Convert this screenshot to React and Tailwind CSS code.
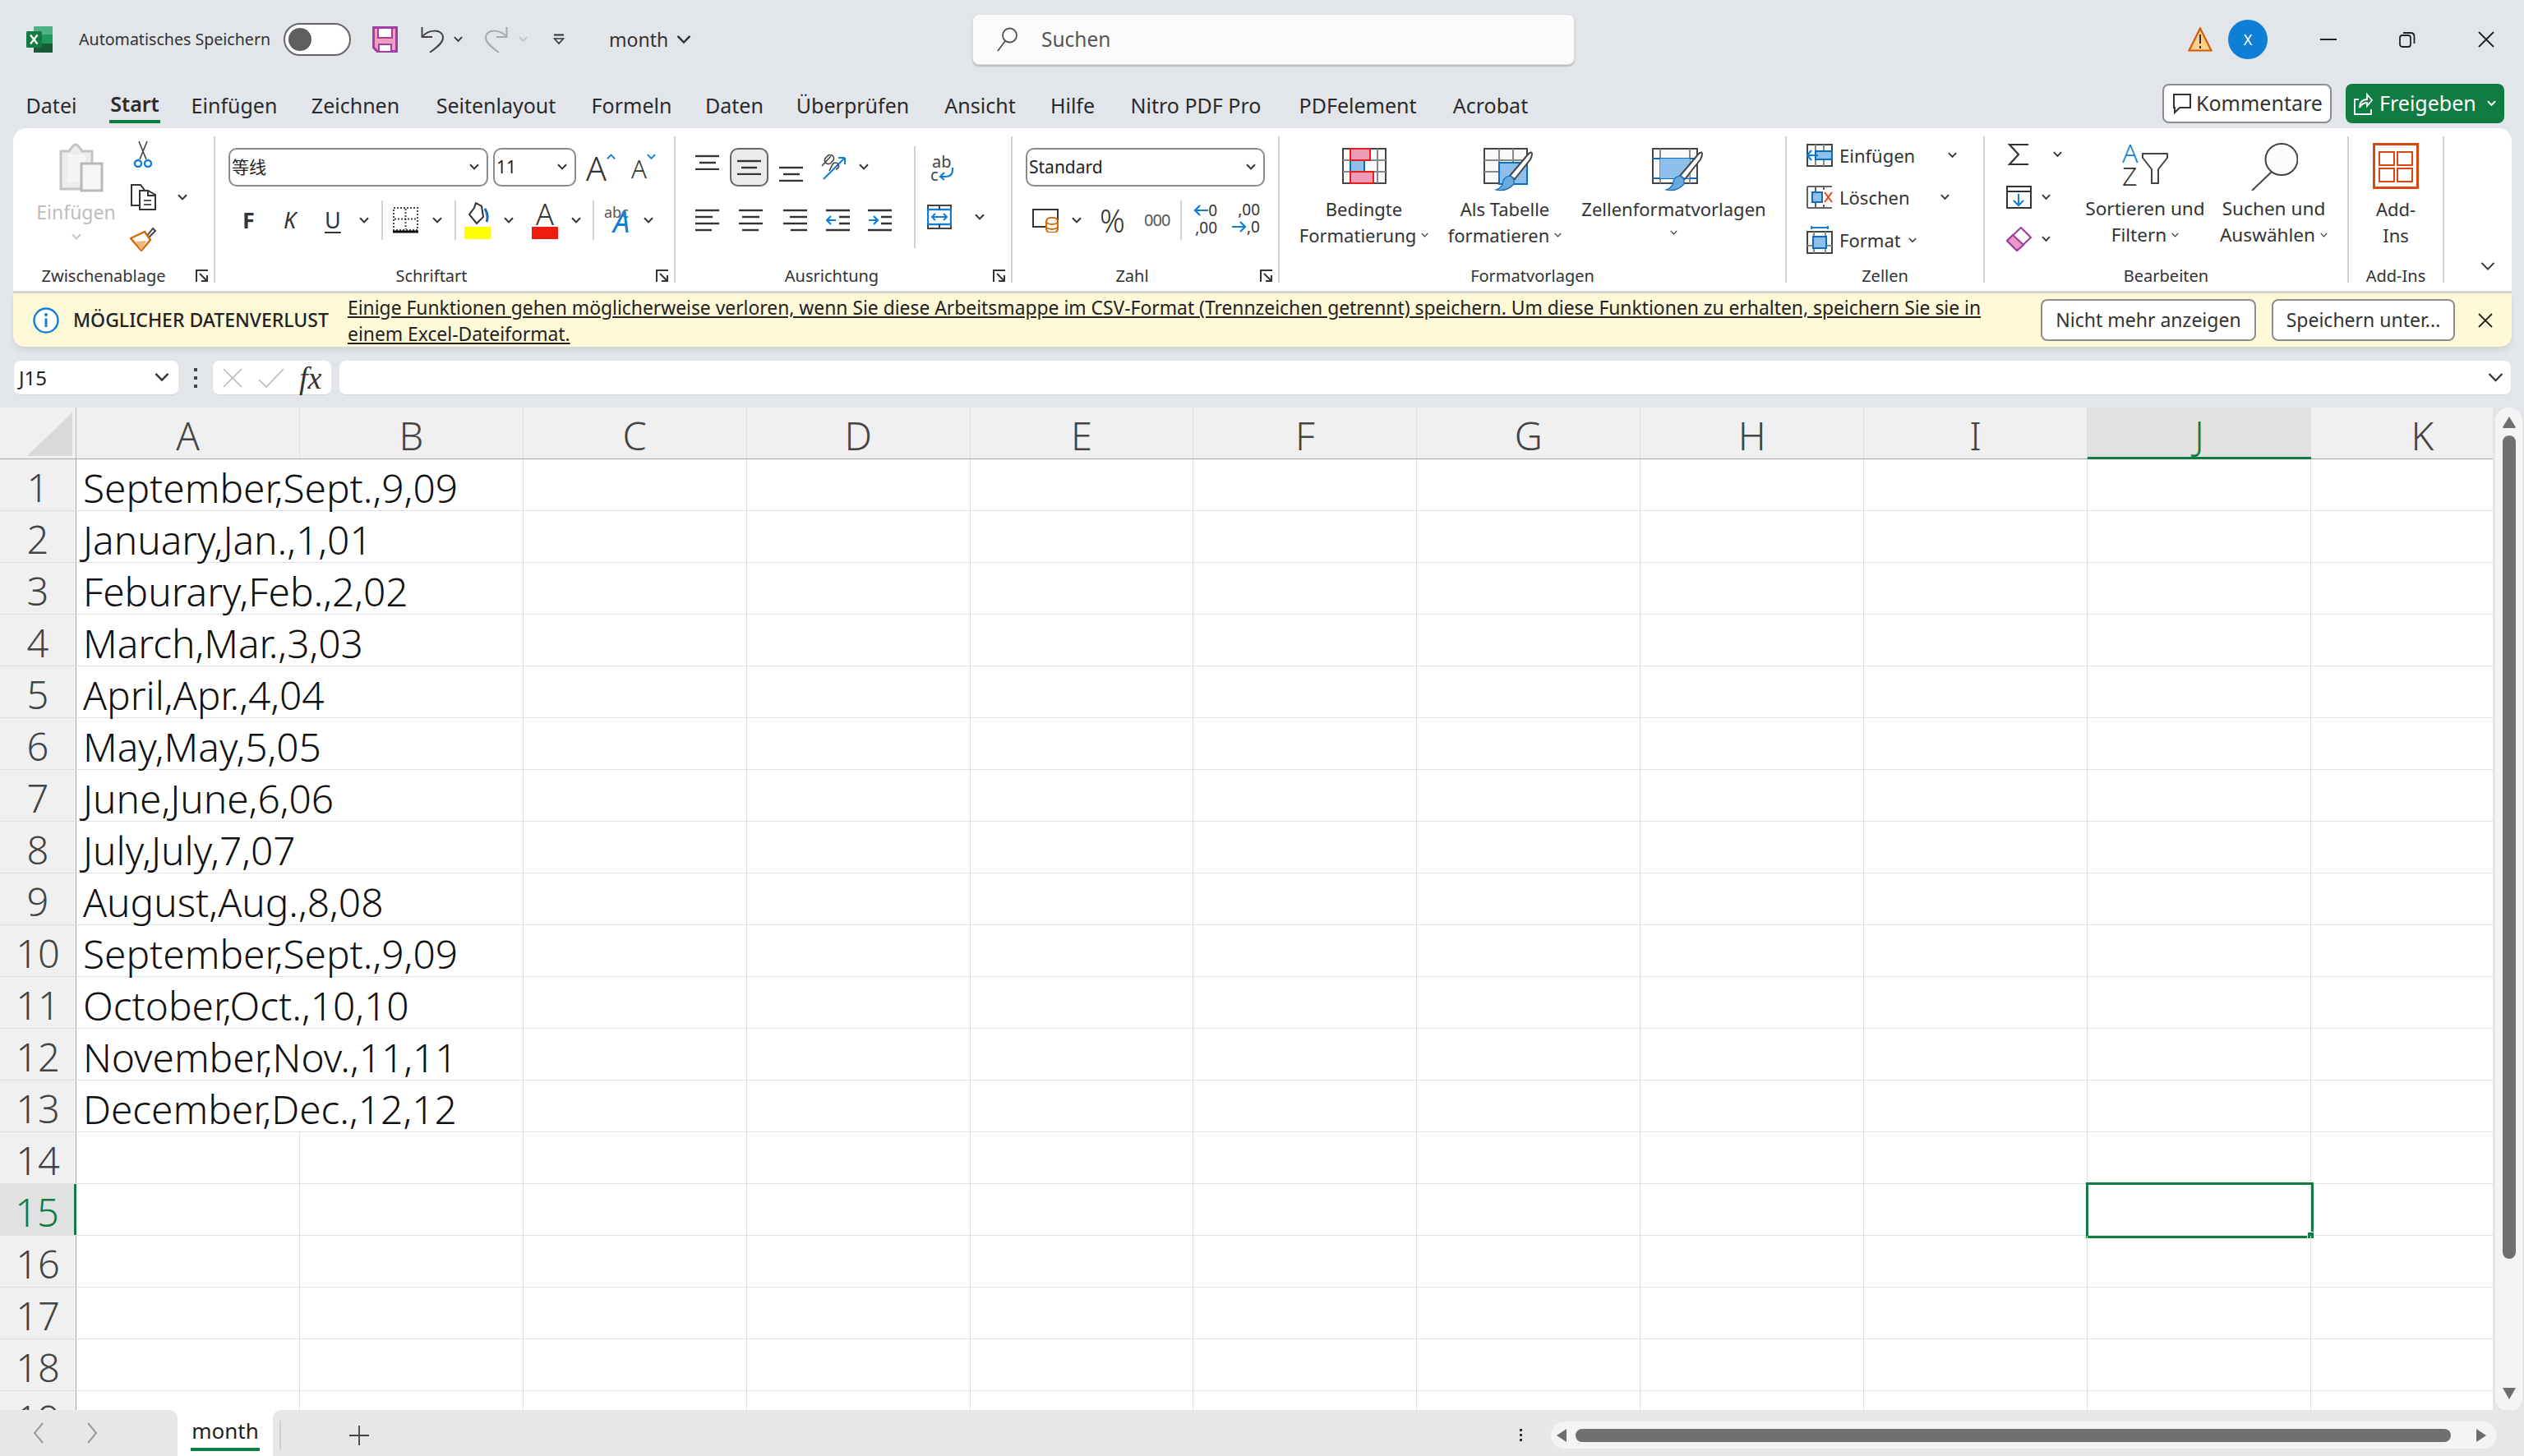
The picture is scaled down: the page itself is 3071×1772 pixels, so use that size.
import React from 'react';

const Svg = ({ w, h, className = '', children }) => (
  <svg width={w} height={h} viewBox={`0 0 ${w} ${h}`} fill="none" className={`shrink-0 block ${className}`}>{children}</svg>
);
const Chev = ({ className = '', s = 12, color = '#333', sw = 2 }) => (
  <svg width={s} height={s * 0.67} viewBox="0 0 12 8" fill="none" className={`shrink-0 block ${className}`}>
    <path d="M1 1.2 L6 6.4 L11 1.2" stroke={color} strokeWidth={sw} />
  </svg>
);
const Launcher = () => (
  <Svg w={16} h={16} className="absolute right-[6px] top-[6px]">
    <path d="M1 15 V1 H15" stroke="#333" strokeWidth="2" />
    <path d="M5 5 L14 14 M14 7 V14 H7" stroke="#333" strokeWidth="2" />
  </Svg>
);
const Group = ({ className, label, launcher, children, labelClass = '' }) => (
  <div className={`relative flex flex-col h-[178px] shrink-0 border-r-2 border-[#d2d2d2] ${className}`}>
    <div className="h-[156px] shrink-0">{children}</div>
    <div className={`relative h-[28px] flex items-center justify-center text-[20px] leading-[28px] text-[#333] ${labelClass}`}>
      <span>{label}</span>
      {launcher ? <Launcher /> : null}
    </div>
  </div>
);
const Lines = ({ w = 30, h, lines, color = '#333', className = '' }) => (
  <Svg w={w} h={h} className={className}>
    {lines.map(([a, b, y], i) => (
      <path key={i} d={`M${a} ${y} H${b}`} stroke={color} strokeWidth="2.4" />
    ))}
  </Svg>
);
const Vsep = ({ className = '' }) => <div className={`w-[2px] bg-[#d2d2d2] shrink-0 ${className}`} />;
const Combo = ({ className, children, chevClass = '' }) => (
  <div className={`h-[47px] border-2 border-[#8a8a8a] rounded-[10px] bg-white flex items-center justify-between pl-[2px] pr-[9px] text-[21px] text-[#222] shrink-0 ${className}`}>
    <span>{children}</span>
    <Chev className={chevClass} />
  </div>
);

const ExcelLogo = () => (
  <Svg w={32} h={32}>
    <rect x="9" y="0" width="23" height="10" fill="#4fb286" />
    <rect x="9" y="10" width="23" height="11" fill="#1f9a5c" />
    <rect x="9" y="21" width="23" height="11" fill="#185c37" />
    <rect x="0" y="6" width="19" height="20" rx="1.5" fill="#107c41" />
    <path d="M5 10.5 L13.5 21.5 M13.5 10.5 L5 21.5" stroke="#fff" strokeWidth="2.4" />
  </Svg>
);
const SaveIcon = () => (
  <Svg w={31} h={32}>
    <path d="M1.5 1.5 H29.5 V30.5 H6 L1.5 26 Z" fill="#ee9fc0" stroke="#a23da6" strokeWidth="3" />
    <rect x="7" y="2" width="17" height="12" fill="#fff" stroke="#a23da6" strokeWidth="2" />
    <rect x="8" y="22" width="15" height="9" fill="#fff" stroke="#a23da6" strokeWidth="2" />
  </Svg>
);
const Undo = ({ color, flip }) => (
  <Svg w={28} h={32} className={flip ? '-scale-x-100' : ''}>
    <path d="M1.5 1 V13 H14 M2 13 C7 4 27 2 27 14 C27 21 17 27 11 32" stroke={color} strokeWidth="2" />
  </Svg>
);
const Qat = () => (
  <Svg w={14} h={14}>
    <path d="M1 1.5 H13" stroke="#333" strokeWidth="2" />
    <path d="M1.5 6 L7 12 L12.5 6 Z" stroke="#333" strokeWidth="1.6" />
  </Svg>
);

export default function App() {
  const rows = [
    'September,Sept.,9,09', 'January,Jan.,1,01', 'Feburary,Feb.,2,02', 'March,Mar.,3,03', 'April,Apr.,4,04',
    'May,May,5,05', 'June,June,6,06', 'July,July,7,07', 'August,Aug.,8,08', 'September,Sept.,9,09',
    'October,Oct.,10,10', 'November,Nov.,11,11', 'December,Dec.,12,12',
  ];
  const cols = ['A', 'B', 'C', 'D', 'E', 'F', 'G', 'H', 'I', 'J', 'K'];
  const all = Array.from({ length: 19 }, (_, i) => i + 1);
  const restCols = [2, 3, 4, 5, 6, 7, 8, 9, 10];
  return (
    <div className="w-[3071px] h-[1772px] overflow-hidden flex flex-col bg-[#e2e5ea] font-['Noto_Sans','Noto_Sans_CJK_SC',sans-serif] text-[#222]">
      {/* title bar */}
      <div className="h-[98px] shrink-0 flex items-center pb-[2px] pl-[32px]">
        <ExcelLogo />
        <span className="ml-[32px] w-[234px] text-[19.6px] whitespace-nowrap text-[#333]">Automatisches Speichern</span>
        <div className="ml-[15px] w-[82px] h-[40px] rounded-full border-2 border-[#666] bg-white flex items-center pl-[4px]">
          <div className="w-[28px] h-[28px] rounded-full bg-[#5e5e5e]" />
        </div>
        <div className="ml-[26px]"><SaveIcon /></div>
        <div className="ml-[28px]"><Undo color="#444" /></div>
        <Chev className="ml-[12px]" s={11} />
        <div className="ml-[27px]"><Undo color="#a8a8a8" flip /></div>
        <Chev className="ml-[13px]" s={11} color="#c4c4c4" />
        <div className="ml-[31px]"><Qat /></div>
        <span className="ml-[54px] w-[70px] text-[23px] text-[#333]">month</span>
        <Chev className="ml-[12px]" s={18} sw={1.6} />
        <div className="ml-[342px] w-[733px] h-[62px] rounded-[8px] bg-[#fbfbfb] border border-[#dcdcdc] shadow-[0_2px_2px_rgba(0,0,0,0.18)] flex items-center pl-[28px]">
          <Svg w={26} h={30}>
            <circle cx="16.5" cy="10" r="8.5" stroke="#555" strokeWidth="1.8" />
            <path d="M11 17 L2 29" stroke="#555" strokeWidth="1.8" />
          </Svg>
          <span className="ml-[29px] text-[24.5px] text-[#555]">Suchen</span>
        </div>
        <Svg w={30} h={30} className="ml-[746px]">
          <path d="M15 1.5 L28.5 28.5 H1.5 Z" fill="#fdd08b" stroke="#d9590b" strokeWidth="2.2" />
          <path d="M15 9 V20 M15 23 V26" stroke="#333" strokeWidth="2" />
        </Svg>
        <div className="ml-[19px] w-[48px] h-[48px] rounded-full bg-[#0f7fd6] text-white flex items-center justify-center text-[18px]">X</div>
        <div className="ml-[64px] w-[20px] h-[2px] bg-[#222]" />
        <Svg w={20} h={20} className="ml-[76px]">
          <rect x="1" y="5" width="13" height="14" rx="3" stroke="#222" strokeWidth="1.8" />
          <path d="M5 2 H14 Q18.5 2 18.5 6.5 V15" stroke="#222" strokeWidth="1.8" />
        </Svg>
        <Svg w={20} h={20} className="ml-[76px]">
          <path d="M1 1 L19 19 M19 1 L1 19" stroke="#222" strokeWidth="1.8" />
        </Svg>
      </div>
      {/* menu */}
      <div className="h-[58px] shrink-0 flex items-start pl-[32px] text-[25px] text-[#2b2b2b] whitespace-nowrap">
        <div className="w-[61px] h-[52px] pt-[9px] flex items-center justify-center">Datei</div>
        <div className="ml-[40px] w-[62px] h-[52px] pt-[9px] flex items-center justify-center border-b-4 border-[#107c41] font-semibold">Start</div>
        <div className="ml-[38px] w-[104px] h-[52px] pt-[9px] flex items-center justify-center">Einfügen</div>
        <div className="ml-[42px] w-[107px] h-[52px] pt-[9px] flex items-center justify-center">Zeichnen</div>
        <div className="ml-[44px] w-[147px] h-[52px] pt-[9px] flex items-center justify-center">Seitenlayout</div>
        <div className="ml-[43px] w-[97px] h-[52px] pt-[9px] flex items-center justify-center">Formeln</div>
        <div className="ml-[41px] w-[71px] h-[52px] pt-[9px] flex items-center justify-center">Daten</div>
        <div className="ml-[41px] w-[135px] h-[52px] pt-[9px] flex items-center justify-center">Überprüfen</div>
        <div className="ml-[45px] w-[85px] h-[52px] pt-[9px] flex items-center justify-center">Ansicht</div>
        <div className="ml-[43px] w-[54px] h-[52px] pt-[9px] flex items-center justify-center">Hilfe</div>
        <div className="ml-[42px] w-[162px] h-[52px] pt-[9px] flex items-center justify-center">Nitro PDF Pro</div>
        <div className="ml-[45px] w-[142px] h-[52px] pt-[9px] flex items-center justify-center">PDFelement</div>
        <div className="ml-[44px] w-[93px] h-[52px] pt-[9px] flex items-center justify-center">Acrobat</div>
        <div className="ml-[771px] mt-[4px] w-[206px] h-[48px] rounded-[8px] border-2 border-[#8d8d8d] bg-white flex items-center pl-[10px] text-[#333]">
          <Svg w={24} h={26}>
            <path d="M2 2 H22 V18 H9 L3 24 V18 H2 Z" stroke="#333" strokeWidth="2" />
          </Svg>
          <span className="ml-[5px] text-[25px]">Kommentare</span>
        </div>
        <div className="ml-[17px] mt-[4px] w-[193px] h-[48px] rounded-[8px] bg-[#107c41] text-white flex items-center pl-[9px]">
          <Svg w={24} h={30}>
            <path d="M7 10 H2 V28 H22 V22" stroke="#fff" strokeWidth="1.8" />
            <path d="M8 20 C8 12 13 10 17 10 V4 L23 11 L17 18 V14 C13 14 10 16 8 20 Z" stroke="#fff" strokeWidth="1.8" />
          </Svg>
          <span className="ml-[8px] text-[25px]">Freigeben</span>
          <Chev className="ml-[13px]" s={11} color="#fff" />
        </div>
      </div>
      {/* ribbon */}
      <div className="ml-[16px] w-[3040px] h-[201px] shrink-0 bg-white rounded-t-[16px] border-b-[3px] border-[#d4d4d4] pt-[10px] flex">
        <Group className="w-[246px]" label="Zwischenablage" launcher labelClass="pr-[24px]">
          <div className="flex">
            <div className="ml-[30px] w-[93px] flex flex-col items-center">
              <Svg w={54} h={60} className="mt-[8px] ml-[12px]">
                <path d="M2 10 H12 L15 6 Q20 -2 25 6 L28 10 H40 V56 H2 Z" fill="#ececec" stroke="#c4c4c4" strokeWidth="3" />
                <rect x="10" y="14" width="22" height="34" fill="#f5f5f5" />
                <rect x="27" y="25" width="25" height="33" fill="#f6f6f6" stroke="#b8b8b8" strokeWidth="3" />
              </Svg>
              <span className="mt-[9px] text-[23px] leading-[30px] text-[#bdbdbd] whitespace-nowrap">Einfügen</span>
              <Chev className="mt-[11px]" color="#c4c4c4" s={12} />
            </div>
            <div className="ml-[19px] flex flex-col">
              <Svg w={32} h={32} className="mt-[6px]">
                <path d="M11 0 L20 22 M21 0 L12 22" stroke="#444" strokeWidth="1.6" />
                <circle cx="10" cy="27" r="4" stroke="#0f7fd6" strokeWidth="2.4" />
                <circle cx="22" cy="27" r="4" stroke="#0f7fd6" strokeWidth="2.4" />
              </Svg>
              <div className="mt-[20px] flex items-center">
                <Svg w={32} h={32}>
                  <path d="M12 1 H2 V26 H11" stroke="#333" strokeWidth="2" />
                  <path d="M10 1 H13 L19 9 M12 8 V31 H31 V13 L22 8 Z M22 8 V14 H31" stroke="#333" strokeWidth="2" />
                  <path d="M17 20 H26 M17 25 H26" stroke="#555" strokeWidth="2" />
                </Svg>
                <Chev className="ml-[26px]" />
              </div>
              <Svg w={32} h={30} className="mt-[20px]">
                <path d="M22 11 L29 2 L32 5 L24 13 Z" fill="#fff" stroke="#444" strokeWidth="2" transform="translate(-1 0)" />
                <path d="M1 14 L18 6 L25 16 L14 29 Z" fill="#fff" stroke="#d16a00" strokeWidth="2.4" />
                <path d="M7 18 L20 17 L14 29 Z" fill="#f3b67a" />
              </Svg>
            </div>
          </div>
        </Group>
        <Group className="w-[560px]" label="Schriftart" launcher labelClass="pr-[32px]">
          <div className="flex items-center ml-[16px] mt-[14px]">
            <Combo className="w-[316px]"><span className="font-['Noto_Sans_CJK_SC',sans-serif]">等线</span></Combo>
            <Combo className="ml-[6px] w-[101px]">11</Combo>
            <div className="ml-[12px] w-[40px] flex items-start text-[41px] leading-[44px] font-light text-[#333]">
              <span>A</span>
              <Chev className="mt-[5px] rotate-180" s={11} color="#0f7fd6" />
            </div>
            <div className="ml-[15px] w-[40px] flex items-start text-[31px] leading-[44px] font-light text-[#333]">
              <span className="mt-[2px]">A</span>
              <Chev className="mt-[6px]" s={11} color="#0f7fd6" />
            </div>
          </div>
          <div className="flex items-center h-[48px] ml-[33px] mt-[17px]">
            <span className="w-[14px] text-[27px] font-bold text-[#333]">F</span>
            <span className="ml-[36px] w-[20px] text-[27px] italic text-[#333]">K</span>
            <span className="ml-[30px] w-[20px] text-[27px] text-[#333] underline decoration-2 underline-offset-4">U</span>
            <Chev className="ml-[22px]" />
            <Vsep className="ml-[15px] h-[48px]" />
            <Svg w={31} h={32} className="ml-[12px]">
              <rect x="1" y="1" width="29" height="27" stroke="#444" strokeWidth="2" strokeDasharray="2 2" />
              <path d="M15.5 2 V27 M2 14.5 H29" stroke="#444" strokeWidth="2" strokeDasharray="2 2" />
              <path d="M0 30 H31" stroke="#111" strokeWidth="3" />
            </Svg>
            <Chev className="ml-[17px]" />
            <Vsep className="ml-[15px] h-[48px]" />
            <div className="ml-[10px] w-[32px] flex flex-col items-center">
              <Svg w={32} h={30}>
                <path d="M14 1 L21 5 L23 18 L15 26 L6 15 L12 7 Z" fill="#fff" stroke="#333" strokeWidth="2" />
                <path d="M25 8 Q30 16 27 24" stroke="#0f6cbd" strokeWidth="3" />
              </Svg>
              <div className="w-[32px] h-[15px] bg-[#ffff00]" />
            </div>
            <Chev className="ml-[16px]" />
            <div className="ml-[22px] w-[32px] flex flex-col items-center">
              <span className="h-[30px] text-[36px] leading-[30px] font-light text-[#333]">A</span>
              <div className="w-[32px] h-[15px] bg-[#ee1c0e]" />
            </div>
            <Chev className="ml-[16px]" />
            <Vsep className="ml-[14px] h-[48px]" />
            <div className="ml-[12px] w-[36px] h-[48px] relative flex">
              <span className="text-[18px] leading-[24px] text-[#555] mt-[2px]">abc</span>
              <span className="absolute left-[11px] top-[4px] text-[36px] leading-[44px] italic text-[#0f7fd6]">A</span>
            </div>
            <Chev className="ml-[12px]" />
          </div>
        </Group>
        <Group className="w-[410px]" label="Ausrichtung" launcher labelClass="pr-[28px]">
          <div className="flex">
            <div className="flex flex-col">
              <div className="flex items-start h-[74px] pt-[14px] ml-[24px]">
                <Lines h={19} lines={[[0, 29, 2], [5, 25, 10], [0, 29, 18]]} className="mt-[8px]" />
                <div className="ml-[12px] w-[47px] h-[47px] bg-[#ebebeb] border-2 border-[#666] rounded-[10px] flex items-center justify-center">
                  <Lines h={19} w={29} lines={[[0, 29, 2], [5, 24, 10], [0, 29, 18]]} />
                </div>
                <Lines h={19} lines={[[0, 29, 2], [5, 25, 10], [0, 29, 18]]} className="ml-[13px] mt-[22px]" />
                <Svg w={32} h={31} className="ml-[21px] mt-[8px]">
                  <path d="M3 30 L29 4 M29 4 H21 M29 4 V12" stroke="#0f7fd6" strokeWidth="2" />
                  <path d="M1 14 L12 2 M7 3 A4.5 4.5 0 1 1 13 9 A4.5 4.5 0 1 1 7 3 M10 20 L14 12 A4 4 0 1 1 18 18" stroke="#444" strokeWidth="1.6" />
                </Svg>
                <Chev className="ml-[14px] mt-[19px]" />
              </div>
              <div className="flex items-center ml-[24px] mt-[14px]">
                <Lines h={28} lines={[[0, 29, 2], [0, 21, 10], [0, 29, 18], [0, 20, 26]]} />
                <Lines h={28} lines={[[0, 29, 2], [4, 25, 10], [0, 29, 18], [4, 24, 26]]} className="ml-[23px]" />
                <Lines h={28} lines={[[0, 29, 2], [8, 29, 10], [0, 29, 18], [9, 29, 26]]} className="ml-[24px]" />
                <Svg w={29} h={28} className="ml-[22px]">
                  <path d="M0 2 H29 M16 10 H29 M16 18 H29 M0 26 H29" stroke="#333" strokeWidth="2.4" />
                  <path d="M12 14 H1 M6 9 L1 14 L6 19" stroke="#0f7fd6" strokeWidth="2.2" />
                </Svg>
                <Svg w={29} h={28} className="ml-[22px]">
                  <path d="M0 2 H29 M16 10 H29 M16 18 H29 M0 26 H29" stroke="#333" strokeWidth="2.4" />
                  <path d="M1 14 H12 M7 9 L12 14 L7 19" stroke="#0f7fd6" strokeWidth="2.2" />
                </Svg>
              </div>
            </div>
            <Vsep className="ml-[27px] mt-[12px] h-[124px]" />
            <div className="flex flex-col ml-[20px]">
              <div className="mt-[23px] h-[30px] w-[32px] flex flex-col text-[20px] leading-[15px] text-[#444] -ml-[2px]">
                <span className="ml-[2px]">ab</span>
                <div className="flex items-center">
                  <span>c</span>
                  <Svg w={20} h={16}>
                    <path d="M17 0 V3 Q17 11 8 11 H2 M7 6 L2 11 L7 15" stroke="#0f7fd6" strokeWidth="2.2" />
                  </Svg>
                </div>
              </div>
              <div className="mt-[30px] flex items-center -ml-[6px]">
                <Svg w={30} h={30}>
                  <rect x="1" y="1" width="28" height="28" stroke="#444" strokeWidth="2" />
                  <rect x="1" y="6" width="28" height="18" fill="#fff" stroke="#0f7fd6" strokeWidth="2.4" />
                  <path d="M15 1 V6 M15 24 V29" stroke="#444" strokeWidth="2" />
                  <path d="M6 15 H24 M10 11 L6 15 L10 19 M20 11 L24 15 L20 19" stroke="#0f7fd6" strokeWidth="2" />
                </Svg>
                <Chev className="ml-[28px]" />
              </div>
            </div>
          </div>
        </Group>
        <Group className="w-[325px]" label="Zahl" launcher labelClass="pr-[32px]">
          <Combo className="ml-[16px] mt-[14px] w-[291px]">Standard</Combo>
          <div className="flex items-center h-[48px] ml-[24px] mt-[17px]">
            <Svg w={32} h={30}>
              <rect x="1" y="2" width="30" height="21" stroke="#333" strokeWidth="2" />
              <rect x="17" y="12" width="14" height="18" rx="5" fill="#fff" stroke="#d16a00" strokeWidth="2.2" />
              <path d="M17 18 Q24 22 31 18 M17 24 Q24 28 31 24" stroke="#d16a00" strokeWidth="2" />
            </Svg>
            <Chev className="ml-[16px]" />
            <span className="ml-[22px] w-[34px] text-[38px] font-light text-[#333] leading-[44px]">%</span>
            <span className="ml-[20px] w-[32px] text-[20px] text-[#555] tracking-[-1px]">000</span>
            <Vsep className="ml-[12px] h-[48px]" />
            <div className="ml-[12px] w-[31px] h-[46px] flex flex-col text-[19px] leading-[20px] text-[#333] items-end">
              <div className="flex items-center h-[22px]">
                <Svg w={18} h={14}><path d="M18 7 H2 M8 1 L2 7 L8 13" stroke="#0f7fd6" strokeWidth="2.2" /></Svg>
                <span>0</span>
              </div>
              <span>,00</span>
            </div>
            <div className="ml-[21px] w-[31px] h-[46px] flex flex-col text-[19px] leading-[20px] text-[#333] items-end">
              <span>,00</span>
              <div className="flex items-center h-[22px]">
                <Svg w={18} h={14}><path d="M0 7 H16 M10 1 L16 7 L10 13" stroke="#0f7fd6" strokeWidth="2.2" /></Svg>
                <span>,0</span>
              </div>
            </div>
          </div>
        </Group>
        <Group className="w-[617px]" label="Formatvorlagen">
          <div className="flex text-[22px] leading-[32px] text-[#333] whitespace-nowrap">
            <div className="ml-[20px] w-[165px] flex flex-col items-center">
              <Svg w={54} h={44} className="mt-[14px]">
                <rect x="1" y="1" width="52" height="42" fill="#fafafa" stroke="#444" strokeWidth="2" />
                <path d="M1 15 H53 M1 29 H53 M10 1 V43 M27 1 V43 M43 1 V43" stroke="#888" strokeWidth="2" />
                <rect x="10" y="15" width="17" height="14" fill="#8cbfea" stroke="#0f6cbd" strokeWidth="2" />
                <rect x="10" y="1" width="24" height="14" fill="#ee9ab8" stroke="#e81e1e" strokeWidth="2" />
                <rect x="10" y="29" width="28" height="14" fill="#ee9ab8" stroke="#e81e1e" strokeWidth="2" />
              </Svg>
              <span className="mt-[14px]">Bedingte</span>
              <span className="flex items-center">Formatierung<Chev className="ml-[6px]" s={9} sw={1.6} /></span>
            </div>
            <div className="ml-[16px] w-[146px] flex flex-col items-center">
              <Svg w={60} h={54} className="mt-[14px] ml-[8px]">
                <rect x="1" y="1" width="52" height="42" fill="#fafafa" stroke="#444" strokeWidth="2" />
                <path d="M1 15 H53 M1 29 H53 M19 1 V43 M36 1 V43" stroke="#888" strokeWidth="2" />
                <rect x="19" y="18" width="34" height="26" fill="#8cbfea" stroke="#0f6cbd" strokeWidth="2" />
                <path d="M54 8 C60 2 60 8 57 14 L38 38 L32 34 Z" fill="#fff" stroke="#444" strokeWidth="2" />
                <path d="M32 34 Q38 36 37 44 Q28 54 15 51 Q24 48 24 40 Q26 35 32 34 Z" fill="#6aa9dd" stroke="#0f6cbd" strokeWidth="1.2" />
              </Svg>
              <span className="mt-[4px]">Als Tabelle</span>
              <span className="flex items-center">formatieren<Chev className="ml-[6px]" s={9} sw={1.6} /></span>
            </div>
            <div className="ml-[18px] w-[229px] flex flex-col items-center">
              <Svg w={62} h={54} className="mt-[14px] ml-[8px]">
                <rect x="1" y="1" width="54" height="42" fill="#fafafa" stroke="#444" strokeWidth="2" />
                <path d="M10 1 V43 M46 1 V43" stroke="#888" strokeWidth="2" />
                <path d="M1 13 H55 M1 37 H55" stroke="#0f6cbd" strokeWidth="2" />
                <rect x="10" y="13" width="36" height="24" fill="#8cbfea" />
                <path d="M56 8 C62 2 62 8 59 14 L40 38 L34 34 Z" fill="#fff" stroke="#444" strokeWidth="2" />
                <path d="M34 34 Q40 36 39 44 Q30 54 17 51 Q26 48 26 40 Q28 35 34 34 Z" fill="#6aa9dd" stroke="#0f6cbd" strokeWidth="1.2" />
              </Svg>
              <span className="mt-[4px]">Zellenformatvorlagen</span>
              <Chev className="mt-[10px]" s={9} sw={1.6} />
            </div>
          </div>
        </Group>
        <Group className="w-[241px]" label="Zellen">
          <div className="flex flex-col ml-[24px] text-[22px] text-[#333]">
            <div className="flex items-center h-[30px] mt-[8px]">
              <Svg w={32} h={28}>
                <rect x="1" y="1" width="30" height="26" fill="#fafafa" stroke="#444" strokeWidth="2" />
                <path d="M11 1 V27 M21 1 V27" stroke="#888" strokeWidth="2" />
                <rect x="11" y="9" width="20" height="10" fill="#8cbfea" stroke="#0f6cbd" strokeWidth="2" />
                <path d="M14 14 H1 M6 8 L1 14 L6 20" stroke="#0f7fd6" strokeWidth="2.2" />
              </Svg>
              <span className="ml-[8px] w-[94px]">Einfügen</span>
              <Chev className="ml-[38px]" s={11} />
            </div>
            <div className="flex items-center h-[30px] mt-[21px]">
              <Svg w={32} h={28}>
                <path d="M1 1 H31 M1 27 H31 M1 1 V27 M11 1 V27 M21 1 V27" stroke="#666" strokeWidth="2" />
                <rect x="7" y="8" width="12" height="12" fill="#8cbfea" stroke="#0f6cbd" strokeWidth="2" />
                <rect x="20" y="5" width="12" height="18" fill="#fff" />
                <path d="M22 8 L31 20 M31 8 L22 20" stroke="#e2450e" strokeWidth="2" />
              </Svg>
              <span className="ml-[8px] w-[86px]">Löschen</span>
              <Chev className="ml-[37px]" s={11} />
            </div>
            <div className="flex items-center h-[34px] mt-[20px]">
              <Svg w={32} h={34}>
                <path d="M6 2 H26 M6 0 V4 M26 0 V4" stroke="#0f7fd6" strokeWidth="2" />
                <rect x="1" y="7" width="30" height="26" fill="#fafafa" stroke="#444" strokeWidth="2" />
                <path d="M1 24 H31 M9 7 V33 M23 7 V33" stroke="#888" strokeWidth="2" />
                <rect x="8" y="13" width="16" height="14" fill="#8cbfea" stroke="#0f6cbd" strokeWidth="2" />
              </Svg>
              <span className="ml-[8px] w-[75px]">Format</span>
              <Chev className="ml-[9px]" s={10} sw={1.8} />
            </div>
          </div>
        </Group>
        <Group className="w-[443px]" label="Bearbeiten">
          <div className="flex">
            <div className="flex flex-col ml-[26px]">
              <div className="flex items-center h-[30px] mt-[7px]">
                <Svg w={31} h={28}>
                  <path d="M27 2 H4 L15 14 L4 26 H27" stroke="#333" strokeWidth="2.2" />
                </Svg>
                <Chev className="ml-[26px]" s={11} />
              </div>
              <div className="flex items-center h-[30px] mt-[22px]">
                <Svg w={31} h={28}>
                  <rect x="1" y="1" width="29" height="26" fill="#fafafa" stroke="#333" strokeWidth="2" />
                  <path d="M1 7 H30" stroke="#333" strokeWidth="2" />
                  <path d="M15 10 V24 M9 18 L15 24 L21 18" stroke="#0f7fd6" strokeWidth="2" />
                </Svg>
                <Chev className="ml-[12px]" s={11} />
              </div>
              <div className="flex items-center h-[30px] mt-[21px]">
                <Svg w={31} h={30}>
                  <path d="M18 1 L30 13 L13 29 L1 17 Z" fill="#fff" stroke="#a23da6" strokeWidth="2.2" />
                  <path d="M8 10 L21 22 L13 29 L1 17 Z" fill="#e79ac4" stroke="#a23da6" strokeWidth="2.2" />
                </Svg>
                <Chev className="ml-[12px]" s={11} />
              </div>
            </div>
            <div className="ml-[29px] w-[144px] flex flex-col items-center text-[22.6px] leading-[32px] text-[#333] whitespace-nowrap">
              <div className="mt-[6px] h-[56px] w-[56px] flex">
                <div className="w-[24px] flex flex-col text-[32px] leading-[28px] font-light">
                  <span className="text-[#0f7fd6]">A</span>
                  <span>Z</span>
                </div>
                <Svg w={32} h={38} className="mt-[14px]">
                  <path d="M1 1 H31 V6 L20 20 V37 H12 V20 L1 6 Z" fill="#fff" stroke="#444" strokeWidth="2" />
                </Svg>
              </div>
              <span className="mt-[10px]">Sortieren und</span>
              <span className="flex items-center">Filtern<Chev className="ml-[6px]" s={9} sw={1.6} /></span>
            </div>
            <div className="ml-[17px] w-[135px] flex flex-col items-center text-[22.6px] leading-[32px] text-[#333] whitespace-nowrap">
              <Svg w={58} h={58} className="mt-[8px]">
                <ellipse cx="38" cy="20" rx="19.5" ry="19" fill="#fbfbfb" stroke="#444" strokeWidth="2" />
                <path d="M26 35 L2 58" stroke="#444" strokeWidth="2" />
              </Svg>
              <span className="mt-[6px]">Suchen und</span>
              <span className="flex items-center">Auswählen<Chev className="ml-[6px]" s={9} sw={1.6} /></span>
            </div>
          </div>
        </Group>
        <Group className="w-[116px]" label="Add-Ins">
          <div className="flex flex-col items-center text-[22px] leading-[32px] text-[#333]">
            <Svg w={56} h={56} className="mt-[8px]">
              <rect x="1.5" y="1.5" width="53" height="53" fill="#fff" stroke="#d9480f" strokeWidth="3" />
              <rect x="8" y="11" width="18" height="16" stroke="#d9480f" strokeWidth="2" />
              <rect x="30" y="11" width="18" height="16" stroke="#d9480f" strokeWidth="2" />
              <rect x="8" y="31" width="18" height="16" stroke="#d9480f" strokeWidth="2" />
              <rect x="30" y="31" width="18" height="16" stroke="#d9480f" strokeWidth="2" />
            </Svg>
            <span className="mt-[8px]">Add-</span>
            <span>Ins</span>
          </div>
        </Group>
        <div className="flex-1 flex items-end justify-end pr-[20px] pb-[14px] h-[178px]">
          <Chev s={18} sw={1.3} />
        </div>
      </div>
      {/* warning bar */}
      <div className="ml-[16px] w-[3040px] h-[65px] shrink-0 bg-[#fff9d8] rounded-b-[14px] shadow-[0_4px_6px_rgba(0,0,0,0.08)] flex items-center pl-[24px]">
        <Svg w={32} h={32}>
          <circle cx="16" cy="16" r="14.5" fill="#fff" stroke="#0f7fd6" strokeWidth="2.4" />
          <path d="M16 13.5 V24" stroke="#0f7fd6" strokeWidth="3" />
          <circle cx="16" cy="9" r="2" fill="#0f7fd6" />
        </Svg>
        <span className="ml-[17px] w-[313px] text-[23px] font-medium whitespace-nowrap text-[#222]">MÖGLICHER DATENVERLUST</span>
        <p className="ml-[21px] w-[1988px] pt-[2px] text-[22.85px] leading-[32px] underline text-[#222] whitespace-nowrap">
          Einige Funktionen gehen möglicherweise verloren, wenn Sie diese Arbeitsmappe im CSV-Format (Trennzeichen getrennt) speichern. Um diese Funktionen zu erhalten, speichern Sie sie in<br />einem Excel-Dateiformat.
        </p>
        <div className="ml-[72px] w-[262px] h-[51px] border-2 border-[#8d8d8d] rounded-[8px] bg-white flex items-center justify-center text-[23px] text-[#333] whitespace-nowrap">Nicht mehr anzeigen</div>
        <div className="ml-[19px] w-[223px] h-[51px] border-2 border-[#8d8d8d] rounded-[8px] bg-white flex items-center justify-center text-[23px] text-[#333] whitespace-nowrap">Speichern unter...</div>
        <Svg w={18} h={18} className="ml-[28px]">
          <path d="M1 1 L17 17 M17 1 L1 17" stroke="#222" strokeWidth="1.8" />
        </Svg>
      </div>
      {/* formula bar */}
      <div className="mt-[17px] h-[42px] shrink-0 flex items-stretch pl-[17px]">
        <div className="w-[200px] rounded-[8px] bg-white border-b border-[#d4d4d4] flex items-center justify-between pl-[6px] pr-[11px] text-[24px] text-[#222]">
          <span>J15</span>
          <Chev s={18} sw={1.6} />
        </div>
        <div className="w-[42px] flex flex-col items-center justify-center gap-[6px]">
          <div className="w-[4px] h-[4px] bg-[#444]" />
          <div className="w-[4px] h-[4px] bg-[#444]" />
          <div className="w-[4px] h-[4px] bg-[#444]" />
        </div>
        <div className="w-[144px] rounded-[8px] bg-white border-b border-[#d4d4d4] flex items-center pl-[12px]">
          <Svg w={24} h={24}>
            <path d="M1 1 L23 23 M23 1 L1 23" stroke="#b8b8b8" strokeWidth="1.6" />
          </Svg>
          <Svg w={32} h={24} className="ml-[19px]">
            <path d="M1 14 L10 23 L31 1" stroke="#b8b8b8" strokeWidth="1.6" />
          </Svg>
          <span className="ml-[18px] font-['Liberation_Serif',serif] italic text-[38px] leading-[38px] text-[#333]">fx</span>
        </div>
        <div className="ml-[10px] w-[2642px] rounded-[8px] bg-white border-b border-[#d4d4d4] flex items-center justify-end pr-[9px]">
          <Chev s={19} sw={1.4} />
        </div>
      </div>
      {/* sheet */}
      <div className="mt-[15px] h-[1220px] shrink-0 flex">
        <div className="w-[3033px] shrink-0 bg-white overflow-hidden flex flex-col">
          <div className="h-[63px] shrink-0 flex bg-[#f0f0f0] border-b border-[#a8a8a8]">
            <div className="w-[93px] shrink-0 border-r border-[#b5b5b5] flex items-end justify-end pr-[4px] pb-[3px]">
              <Svg w={55} h={53}><path d="M55 0 V53 H0 Z" fill="#d9d9d9" /></Svg>
            </div>
            {cols.map((c) => (
              c === 'J'
                ? <div key={c} className="w-[272px] shrink-0 bg-[#e1e1e1] border-b-[3px] border-[#107c41] -mb-px flex items-center justify-center pt-[6px] text-[47px] leading-[57px] font-light text-[#107c41]">{c}</div>
                : <div key={c} className="w-[271.9px] shrink-0 border-r border-[#dedede] flex items-center justify-center pt-[6px] text-[47px] leading-[57px] font-light text-[#444]">{c}</div>
            ))}
          </div>
          {all.map((n) => (
            <div key={n} className="h-[63px] shrink-0 flex border-b border-[#e0e0e0]">
              {n === 15
                ? <div className="w-[93px] shrink-0 bg-[#e1e1e1] border-r-[3px] border-[#107c41] flex items-center justify-center pt-[6px] text-[47px] leading-[57px] font-light text-[#107c41]">{n}</div>
                : <div className="w-[93px] shrink-0 bg-[#f0f0f0] border-r border-[#a8a8a8] flex items-center justify-center pt-[6px] text-[47px] leading-[57px] font-light text-[#444]">{n}</div>}
              {n <= 13 ? (
                <div className="w-[543.8px] shrink-0 border-r border-[#e0e0e0] pl-[8px] pt-[7px] flex items-center text-[47.8px] leading-[56px] font-light text-[#111] whitespace-nowrap">{rows[n - 1]}</div>
              ) : (
                <>
                  <div className="w-[271.9px] shrink-0 border-r border-[#e0e0e0]" />
                  <div className="w-[271.9px] shrink-0 border-r border-[#e0e0e0]" />
                </>
              )}
              {restCols.map((c) => (
                <div key={c} className="relative w-[271.9px] shrink-0 border-r border-[#e0e0e0]">
                  {n === 15 && c === 9 ? (
                    <div className="absolute left-[-2px] top-[-2px] w-[277px] h-[68px] border-[3px] border-[#107c41]">
                      <div className="absolute right-[-4px] bottom-[-4px] w-[9px] h-[9px] bg-[#107c41] border border-white" />
                    </div>
                  ) : null}
                </div>
              ))}
            </div>
          ))}
        </div>
        <div className="w-[38px] shrink-0 pl-[3px] pr-[2px] bg-[#e2e5ea]">
          <div className="h-[1222px] rounded-full bg-[#f4f4f4] flex flex-col items-center">
            <Svg w={18} h={16} className="mt-[10px]"><path d="M9 1 L17 14 Q17 15 15 15 H3 Q1 15 1 14 Z" fill="#6e6e6e" /></Svg>
            <div className="mt-[8px] w-[16px] h-[1002px] rounded-full bg-[#707070]" />
            <Svg w={18} h={16} className="mt-[156px]"><path d="M1 1 H17 L9 15 Z" fill="#6e6e6e" /></Svg>
          </div>
        </div>
      </div>
      {/* sheet tabs */}
      <div className="h-[56px] shrink-0 flex bg-white">
        <div className="w-[216px] shrink-0 bg-[#e8e6e6] rounded-tr-[10px] flex items-center">
          <Svg w={14} h={26} className="ml-[40px]"><path d="M12 1 L2 13 L12 25" stroke="#9a9a9a" strokeWidth="2" /></Svg>
          <Svg w={14} h={26} className="ml-[51px]"><path d="M2 1 L12 13 L2 25" stroke="#9a9a9a" strokeWidth="2" /></Svg>
        </div>
        <div className="w-[116px] shrink-0 bg-white flex flex-col items-center">
          <span className="h-[46px] flex items-center text-[26px] text-[#222] pt-[4px]">month</span>
          <div className="w-[84px] h-[4px] bg-[#107c41]" />
        </div>
        <div className="flex-1 bg-[#e8e6e6] rounded-tl-[10px] flex items-center pt-[5px]">
          <div className="ml-[8px] w-[2px] h-[36px] bg-[#cfcfcf]" />
          <Svg w={24} h={24} className="ml-[83px]"><path d="M12 0 V24 M0 12 H24" stroke="#444" strokeWidth="1.8" /></Svg>
          <div className="ml-[1400px] flex flex-col gap-[3px]">
            <div className="w-[3px] h-[3px] bg-[#333]" />
            <div className="w-[3px] h-[3px] bg-[#333]" />
            <div className="w-[3px] h-[3px] bg-[#333]" />
          </div>
          <div className="ml-[35px] w-[1151px] h-[33px] rounded-full bg-[#f4f4f4] flex items-center pl-[6px]">
            <Svg w={14} h={18}><path d="M13 1 V17 L1 9 Z" fill="#6e6e6e" /></Svg>
            <div className="ml-[10px] w-[1065px] h-[16px] rounded-full bg-[#707070]" />
            <Svg w={14} h={18} className="ml-[30px]"><path d="M1 1 V17 L13 9 Z" fill="#6e6e6e" /></Svg>
          </div>
        </div>
      </div>
    </div>
  );
}
